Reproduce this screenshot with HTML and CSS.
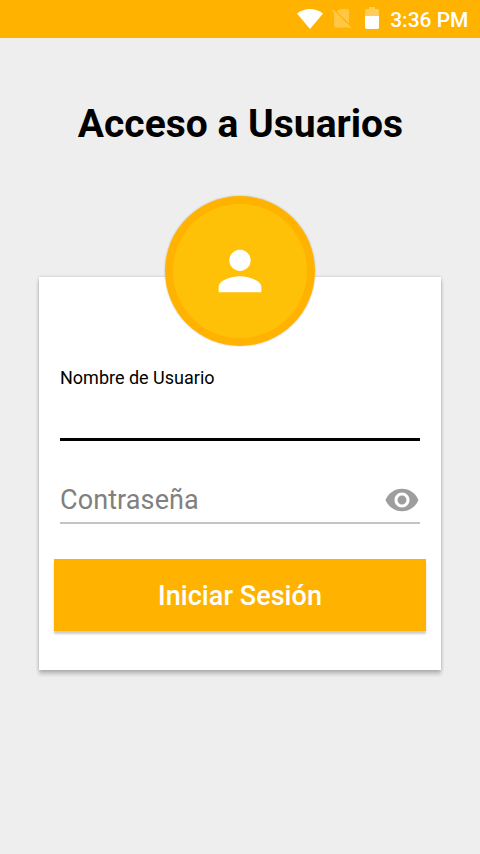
FILE: index.html
```html
<!DOCTYPE html>
<html lang="es">
<head>
<meta charset="utf-8">
<title>Acceso a Usuarios</title>
<link rel="stylesheet" href="styles.css">
</head>
<body>
<header class="status">
  <svg class="wifi" width="26" height="20" viewBox="0 0 26 20"><path d="M0 4.600C7.600-1.500 18.400-1.500 26 4.600L13 20Z"/></svg>
  <svg class="sim" width="20" height="21" viewBox="0 0 20 21"><path class="dim" d="M8 1H15.500Q17 1 17 2.500V15.500L4.500 3.500ZM2 4.500L17 19.500H4Q2 19.500 2 17.500Z"/><path class="slash" d="M0.500 2L18.500 20"/></svg>
  <svg class="battery" width="14" height="22" viewBox="0 0 14 22"><path class="shell" d="M0 9V3.500Q0 2 1.500 2H4V0H10V2H12.500Q14 2 14 3.500V9Z"/><path d="M0 9H14V20.500Q14 22 12.500 22H1.500Q0 22 0 20.500Z"/></svg>
  <span class="time">3:36 PM</span>
</header>
<main>
  <h1>Acceso a Usuarios</h1>
  <section class="card">
    <div class="avatar">
      <svg width="64" height="64" viewBox="0 0 24 24"><path d="M12 12c2.210 0 4-1.790 4-4s-1.790-4-4-4-4 1.790-4 4 1.790 4 4 4zm0 2c-2.670 0-8 1.340-8 4v2h16v-2c0-2.660-5.330-4-8-4z"/></svg>
    </div>
    <div class="field user"><span class="label">Nombre de Usuario</span></div>
    <div class="field password">
      <span class="hint">Contraseña</span>
      <svg width="36" height="36" viewBox="0 0 24 24"><path d="M12 4.500C7 4.500 2.730 7.610 1 12c1.730 4.390 6 7.500 11 7.500s9.270-3.110 11-7.500c-1.730-4.390-6-7.500-11-7.500zM12 17c-2.760 0-5-2.240-5-5s2.240-5 5-5 5 2.240 5 5-2.240 5-5 5zm0-8c-1.660 0-3 1.340-3 3s1.340 3 3 3 3-1.340 3-3-1.340-3-3-3z"/></svg>
    </div>
    <button class="submit">Iniciar Sesión</button>
  </section>
</main>
</body>
</html>
```
FILE: styles.css
```css
* { box-sizing: border-box; }
body {
  margin: 0;
  height: 854px;
  background: #eee;
  font-family: Roboto, sans-serif;
  color: #000;
  overflow: hidden;
}
svg { display: block; flex: none; }
.status {
  display: flex;
  justify-content: flex-end;
  height: 38px;
  padding: 0 11.5px 0 0;
  background: #ffb300;
  color: #fff;
  fill: #fff;
}
.wifi { margin: 8.5px 9px 0 0; }
.sim { margin: 8px 13.500px 0 0; }
.battery { margin: 7px 11px 0 0; }
.dim { opacity: .27; }
.shell { opacity: .35; }
.slash { fill: none; stroke: #fff; stroke-width: 1.500; opacity: .3; }
.time {
  font-size: 21px;
  font-weight: 500;
  line-height: 40px;
}
main { padding: 62px 39px 0; }
h1 {
  margin: 0;
  padding-left: 1px;
  font-size: 39px;
  font-weight: 700;
  line-height: 48px;
  text-align: center;
  white-space: nowrap;
}
.card {
  height: 393px;
  margin-top: 129px;
  padding: 0 15px;
  background: #fff;
  box-shadow: 0 4px 4px rgba(0, 0, 0, .22), 0 0 3px rgba(0, 0, 0, .18);
  display: flow-root;
}
.avatar {
  display: flex;
  align-items: center;
  justify-content: center;
  width: 150px;
  height: 150px;
  margin: -81px auto 0;
  border-radius: 50%;
  background: radial-gradient(circle, #ffc107 66.5px, #ffb300 67.5px);
  box-shadow: 0 0 2px rgba(0, 0, 0, .25);
  fill: #fff;
}
.field { margin: 0 6px; }
.user {
  height: 95px;
  padding-top: 20px;
  border-bottom: 3px solid #000;
}
.label {
  display: block;
  font-size: 18px;
  line-height: 24px;
}
.password {
  display: flex;
  justify-content: space-between;
  height: 83px;
  padding-top: 41px;
  border-bottom: 2px solid #c4c4c4;
  color: #808080;
  fill: #9e9e9e;
}
.hint {
  font-size: 27px;
  letter-spacing: .1px;
  line-height: 36px;
}
.submit {
  display: block;
  width: 100%;
  height: 72px;
  margin: 35px 0 0;
  padding: 2px 0 0;
  border: 0;
  background: #ffb300;
  box-shadow: 0 3px 2px rgba(0, 0, 0, .2);
  color: #fff;
  font: 500 27px Roboto, sans-serif;
  letter-spacing: .05px;
}
```
